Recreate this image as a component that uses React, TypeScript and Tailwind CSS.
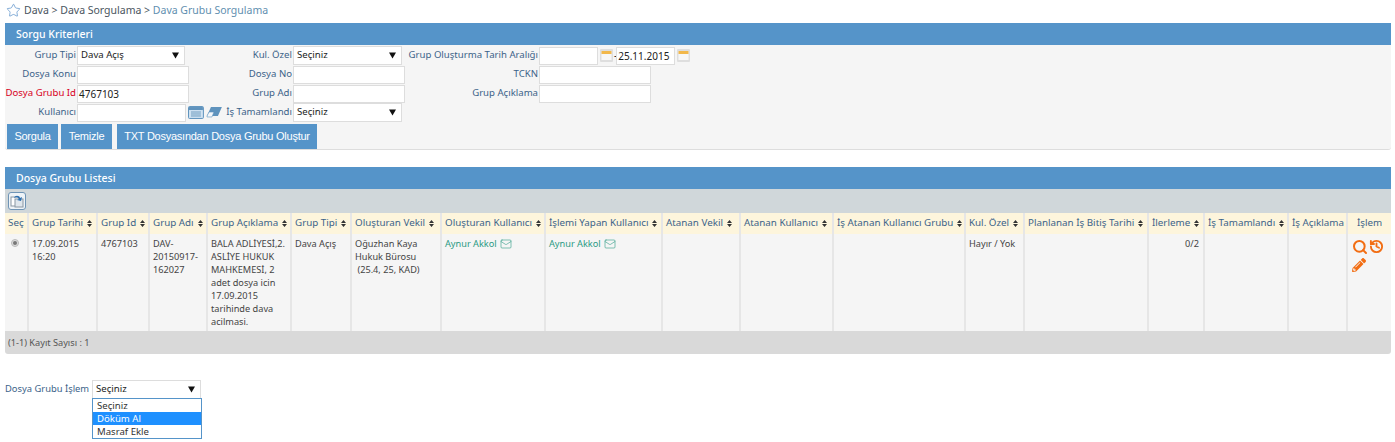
import React from 'react';
import { History, Mail, Search, Star } from 'lucide-react';
import { FaPencilAlt } from 'react-icons/fa';

const columns = [
  { label: 'Seç', width: 'w-[23px] text-left', sort: false },
  { label: 'Grup Tarihi', width: 'w-[69px] text-left', sort: true },
  { label: 'Grup Id', width: 'w-[52px] text-left', sort: true },
  { label: 'Grup Adı', width: 'w-[58px] text-left', sort: true },
  { label: 'Grup Açıklama', width: 'w-[84px] text-left', sort: true },
  { label: 'Grup Tipi', width: 'w-[60px] text-left', sort: true },
  { label: 'Oluşturan Vekil', width: 'w-[90px] text-left', sort: true },
  { label: 'Oluşturan Kullanıcı', width: 'w-[104px] text-left', sort: true },
  { label: 'İşlemi Yapan Kullanıcı', width: 'w-[117px] text-left', sort: true },
  { label: 'Atanan Vekil', width: 'w-[78px] text-left', sort: true },
  { label: 'Atanan Kullanıcı', width: 'w-[93px] text-left', sort: true },
  { label: 'İş Atanan Kullanıcı Grubu', width: 'w-[132px] text-left', sort: true },
  { label: 'Kul. Özel', width: 'w-[59px] text-left', sort: true },
  { label: 'Planlanan İş Bitiş Tarihi', width: 'w-[124px] text-left', sort: true },
  { label: 'İlerleme', width: 'w-[56px] text-left', sort: true },
  { label: 'İş Tamamlandı', width: 'w-[84px] text-left', sort: true },
  { label: 'İş Açıklama', width: 'w-[59px] text-left', sort: false },
  { label: 'İşlem', width: 'w-[44px] text-center', sort: false },
];

function SortIcon() {
  return (
    <svg width="5" height="7" viewBox="0 0 5 7" className="inline-block ml-[4px] align-[-0.5px]">
      <path d="M2.5 0 5 3H0zM2.5 7 0 4h5z" fill="#333" />
    </svg>
  );
}

function CalendarIcon() {
  return (
    <svg width="13" height="13" viewBox="0 0 13 13" className="shrink-0">
      <rect x="0" y="0" width="13" height="13" rx="1" fill="#dedede" />
      <rect x="1.5" y="2" width="10" height="9" fill="#f7f7f7" />
      <rect x="1.5" y="2" width="10" height="3" fill="#f2b84b" />
    </svg>
  );
}

function SelectBox({ value, className = '' }: { value: string; className?: string }) {
  return (
    <div className={`h-[19px] bg-white border border-[#dddddd] flex items-center justify-between pl-[3px] pr-[5px] text-[9.6px] text-[#222] ${className}`}>
      <span>{value}</span>
      <svg width="7" height="7" viewBox="0 0 7 7"><path d="M0 .5h7L3.5 6.5z" fill="#111" /></svg>
    </div>
  );
}

function TextBox({ value = '', className = 'w-[112px]' }: { value?: string; className?: string }) {
  return (
    <div className={`h-[18px] bg-white border border-[#dddddd] pl-[1px] leading-[16px] text-[#222] ${className}`}>{value}</div>
  );
}

function Label({ children, red = false }: { children: React.ReactNode; red?: boolean }) {
  return <div className={`text-right pr-[1px] pb-[2px] text-[9.6px] leading-[14px] whitespace-nowrap ${red ? 'text-[#d8001c]' : 'text-[#3c6389]'}`}>{children}</div>;
}

function PanelHeader({ title }: { title: string }) {
  return <div className="h-[22px] bg-[#5594c9] text-white pl-[11px] leading-[22px] text-[10.5px] font-medium">{title}</div>;
}

export default function App() {
  return (
    <div className="w-[1395px] h-[442px] overflow-hidden bg-white text-[10px] font-['Noto_Sans',sans-serif]">
      {/* Breadcrumb */}
      <div className="h-[23px] pl-[6px] pb-[2px] flex items-center gap-[3px] text-[10.5px] text-[#4a5560]">
        <Star size={15} strokeWidth={1} className="text-[#3f7fc0]" />
        <span>Dava &gt; Dava Sorgulama &gt; <span className="text-[#5f8fb0]">Dava Grubu Sorgulama</span></span>
      </div>

      {/* Sorgu Kriterleri */}
      <div className="ml-[5px] w-[1386px] h-[127px] bg-[#f5f5f5] border-b border-[#dddddd] rounded-b-[3px] overflow-hidden">
        <PanelHeader title="Sorgu Kriterleri" />
        <div className="grid grid-cols-[72px_145px_71px_115px_131px_1fr] auto-rows-[19px] items-center pt-[1px]">
          <Label>Grup Tipi</Label>
          <SelectBox value="Dava Açış" className="w-[108px]" />
          <Label>Kul. Özel</Label>
          <SelectBox value="Seçiniz" className="w-[109px]" />
          <Label>Grup Oluşturma Tarih Aralığı</Label>
          <div className="flex items-center gap-[2px]">
            <TextBox className="w-[59px]" />
            <CalendarIcon />
            <span className="text-[#222] -ml-[1px] -mr-[3px]">-</span>
            <TextBox value="25.11.2015" className="w-[59px]" />
            <CalendarIcon />
          </div>

          <Label>Dosya Konu</Label>
          <TextBox />
          <Label>Dosya No</Label>
          <TextBox />
          <Label>TCKN</Label>
          <TextBox />

          <Label red>Dosya Grubu Id</Label>
          <TextBox value="4767103" />
          <Label>Grup Adı</Label>
          <TextBox />
          <Label>Grup Açıklama</Label>
          <TextBox />

          <Label>Kullanıcı</Label>
          <div className="flex items-center">
            <TextBox className="w-[110px]" />
            <svg width="16" height="13" viewBox="0 0 16 13" className="ml-[2px]">
              <rect x="0.5" y="0.5" width="15" height="12" rx="1" fill="#cfe2f2" stroke="#5f93bd" />
              <rect x="1" y="1" width="14" height="3" fill="#5f93bd" />
              <path d="M3 6h10M3 8h10M3 10h10" stroke="#6f9cc0" />
            </svg>
            <svg width="16" height="11" viewBox="0 0 16 11" className="ml-[2px]">
              <path d="M5 0h11l-4 9H1z" fill="#5f93bd" />
              <path d="M1 9 3 5h5L6 10H1z" fill="#f3f7fb" stroke="#5f93bd" strokeWidth="0.6" />
            </svg>
          </div>
          <Label>İş Tamamlandı</Label>
          <SelectBox value="Seçiniz" className="w-[109px]" />
          <div />
          <div />
        </div>
        <div className="flex gap-[3px] pl-[2px] pt-[2px] font-['Liberation_Sans',sans-serif] text-[11px] tracking-[-0.25px] text-white whitespace-nowrap">
          <button className="h-[25px] w-[51px] bg-[#5594c9]">Sorgula</button>
          <button className="h-[25px] w-[51px] bg-[#5594c9]">Temizle</button>
          <button className="h-[25px] w-[200px] ml-[2px] bg-[#5594c9]">TXT Dosyasından Dosya Grubu Oluştur</button>
        </div>
      </div>

      {/* Dosya Grubu Listesi */}
      <div className="ml-[5px] w-[1386px] mt-[17px] rounded-b-[3px] overflow-hidden">
        <PanelHeader title="Dosya Grubu Listesi" />
        <div className="h-[24px] bg-[#d0d7da] pl-[3px] flex items-center">
          <div className="w-[18px] h-[18px] rounded-[3px] border border-[#6f94b5] bg-[#eef3f7] flex items-center justify-center">
            <svg width="14" height="14" viewBox="0 0 14 14">
              <rect x="1" y="3" width="8" height="9" fill="#fff" stroke="#8a97a3" />
              <rect x="5" y="5" width="8" height="8" fill="#dfe6ec" stroke="#8a97a3" />
              <path d="M4 4c1-3 5-3 6 0l2-1-1 4-4-1 2-1c-1-2-3-2-5-1z" fill="#2c6fb0" />
            </svg>
          </div>
        </div>
        <table className="w-[1386px] table-fixed border-collapse">
          <thead>
            <tr className="h-[21px] bg-[#fdf5dc]">
              {columns.map((col) => (
                <th key={col.label} className={`${col.width} border-r-2 border-[#e6e6e6] last:border-r-0 px-[3px] font-normal text-[#3c6389] text-[9.8px] whitespace-nowrap overflow-hidden`}>
                  {col.label}
                  {col.sort && <SortIcon />}
                </th>
              ))}
            </tr>
          </thead>
          <tbody>
            <tr className="h-[97px] bg-[#f5f5f5] align-top text-[9.2px] leading-[13px] text-[#444]">
              <td className="border-r-2 border-[#e6e6e6] pt-[3px] pl-[6px]">
                <span className="mt-[2px] block w-[8px] h-[8px] rounded-full bg-[#ddd] border border-[#bbb] p-[1px]">
                  <span className="block w-[4px] h-[4px] rounded-full bg-[#777]" />
                </span>
              </td>
              <td className="border-r-2 border-[#e6e6e6] px-[3px] pt-[3px]">17.09.2015 16:20</td>
              <td className="border-r-2 border-[#e6e6e6] px-[3px] pt-[3px]">4767103</td>
              <td className="border-r-2 border-[#e6e6e6] px-[3px] pt-[3px]">DAV-20150917-162027</td>
              <td className="border-r-2 border-[#e6e6e6] px-[3px] pt-[3px]">BALA ADLİYESİ,2.<br />ASLİYE HUKUK<br />MAHKEMESİ, 2<br />adet dosya icin<br />17.09.2015<br />tarihinde dava<br />acilmasi.</td>
              <td className="border-r-2 border-[#e6e6e6] px-[3px] pt-[3px]">Dava Açış</td>
              <td className="border-r-2 border-[#e6e6e6] px-[3px] pt-[3px]">Oğuzhan Kaya Hukuk Bürosu<br />&nbsp;(25.4, 25, KAD)</td>
              <td className="border-r-2 border-[#e6e6e6] px-[3px] pt-[3px] text-[#2b9a84] whitespace-nowrap">
                Aynur Akkol <Mail size={12} strokeWidth={1.2} className="inline-block ml-[1px] align-[-3px]" />
              </td>
              <td className="border-r-2 border-[#e6e6e6] px-[3px] pt-[3px] text-[#2b9a84] whitespace-nowrap">
                Aynur Akkol <Mail size={12} strokeWidth={1.2} className="inline-block ml-[1px] align-[-3px]" />
              </td>
              <td className="border-r-2 border-[#e6e6e6]" />
              <td className="border-r-2 border-[#e6e6e6]" />
              <td className="border-r-2 border-[#e6e6e6]" />
              <td className="border-r-2 border-[#e6e6e6] px-[3px] pt-[3px]">Hayır / Yok</td>
              <td className="border-r-2 border-[#e6e6e6]" />
              <td className="border-r-2 border-[#e6e6e6] px-[4px] pt-[3px] text-right">0/2</td>
              <td className="border-r-2 border-[#e6e6e6]" />
              <td className="border-r-2 border-[#e6e6e6]" />
              <td className="pl-[4px] pt-[5px]">
                <div className="flex flex-wrap gap-x-[1px] gap-y-[3px] text-[#f26d13]">
                  <Search size={16} strokeWidth={3} />
                  <History size={15} strokeWidth={3} />
                  <FaPencilAlt size={14} />
                </div>
              </td>
            </tr>
          </tbody>
        </table>
        <div className="h-[23px] bg-[#d9d9d9] pl-[3px] leading-[23px] text-[9.2px] text-[#555]">(1-1) Kayıt Sayısı : 1</div>
      </div>

      {/* Dosya Grubu İşlem */}
      <div className="mt-[26px] ml-[5px] flex items-start text-[9.4px]">
        <div className="w-[87px] leading-[18px] text-[#3c6389] whitespace-nowrap">Dosya Grubu İşlem</div>
        <div className="relative">
          <SelectBox value="Seçiniz" className="w-[109px] h-[18px] border-[#5594c9]" />
          <div className="absolute left-0 top-[18px] w-[110px] bg-white border border-[#5594c9] text-[9.6px] text-[#333] leading-[13px]">
            <div className="h-[13px] pl-[4px]">Seçiniz</div>
            <div className="h-[13px] pl-[4px] bg-[#1e90ff] text-white">Döküm Al</div>
            <div className="h-[13px] pl-[4px]">Masraf Ekle</div>
          </div>
        </div>
      </div>
    </div>
  );
}
